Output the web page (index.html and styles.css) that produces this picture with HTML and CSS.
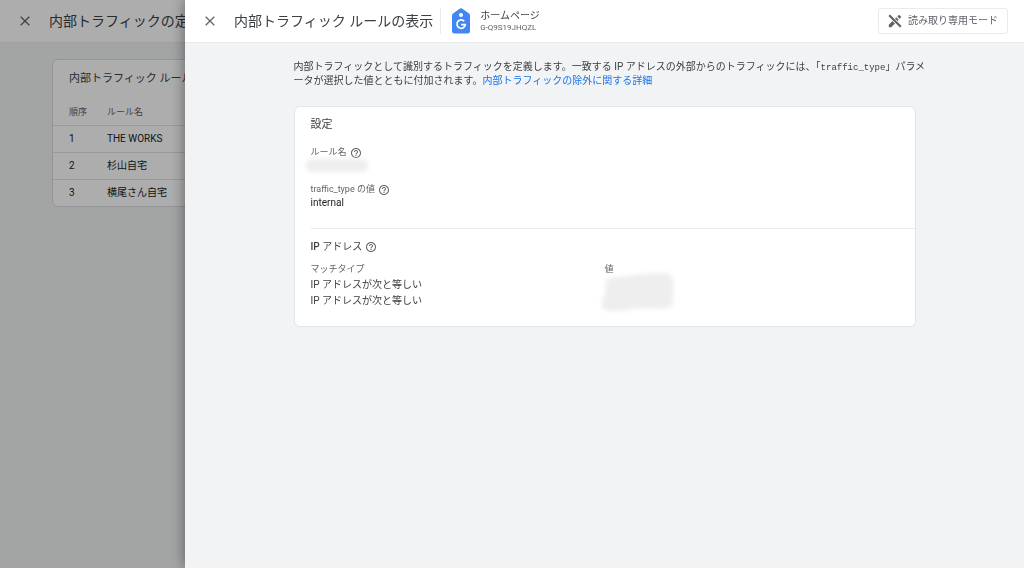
FILE: index.html
```html
<!DOCTYPE html>
<html lang="ja">
<head>
<meta charset="utf-8">
<meta name="viewport" content="width=device-width, initial-scale=1">
<title>内部トラフィック ルールの表示</title>
<link rel="stylesheet" href="styles.css">
</head>
<body>
<svg class="sprite" aria-hidden="true">
  <symbol id="close" viewBox="0 0 10 10"><path d="M.7.7l8.6 8.6M9.3.7L.7 9.3" fill="none" stroke="currentColor" stroke-width="1.3"/></symbol>
  <symbol id="help" viewBox="2 2 20 20"><path fill="currentColor" d="M11 18h2v-2h-2v2zm1-16C6.48 2 2 6.48 2 12s4.480 10 10 10 10-4.480 10-10S17.520 2 12 2zm0 18c-4.410 0-8-3.590-8-8s3.590-8 8-8 8 3.590 8 8-3.590 8-8 8zm0-14c-2.210 0-4 1.790-4 4h2c0-1.100.9-2 2-2s2 .9 2 2c0 2-3 1.750-3 5h2c0-2.250 3-2.500 3-5 0-2.210-1.790-4-4-4z"/></symbol>
</svg>
<div class="page" inert>
  <header class="bar">
    <button class="icon-button" type="button" aria-label="閉じる"><svg class="close"><use href="#close"/></svg></button>
    <h1 class="title">内部トラフィックの定義</h1>
  </header>
  <main class="rules">
    <h2 class="rules-title">内部トラフィック ルール</h2>
    <table class="rules-table">
      <thead><tr><th class="order">順序</th><th>ルール名</th></tr></thead>
      <tbody>
        <tr><td>1</td><td>THE WORKS</td></tr>
        <tr><td>2</td><td>杉山自宅</td></tr>
        <tr><td>3</td><td>横尾さん自宅</td></tr>
      </tbody>
    </table>
  </main>
</div>
<div class="scrim"></div>
<section class="drawer" role="dialog" aria-labelledby="drawer-title">
  <header class="bar">
    <button class="icon-button" type="button" aria-label="閉じる"><svg class="close"><use href="#close"/></svg></button>
    <h1 class="title" id="drawer-title">内部トラフィック ルールの表示</h1>
    <div class="property">
      <svg class="tag" viewBox="0 0 18 26" aria-hidden="true">
        <path fill="#4285f4" d="M8 .5Q9-.2 10 .5L17 5.500Q18 6.300 18 7.500V23Q18 25.500 15.500 25.500H2.500Q0 25.500 0 23V7.500Q0 6.300 1 5.500Z"/>
        <circle cx="9" cy="7" r="2" fill="#fff"/>
        <path fill="none" stroke="#fff" stroke-width="1.700" d="M12.200 13.200A4.200 4.200 0 1 0 13.300 16.700H9.200"/>
      </svg>
      <div class="property-text">
        <span class="property-name">ホームページ</span>
        <span class="property-id">G-Q9S19JHQZL</span>
      </div>
    </div>
    <button class="mode" type="button">
      <svg class="mode-icon" viewBox="0 0 14 14" aria-hidden="true">
        <path fill="#5f6368" d="M.8 10.800L8.300 3.300l2.400 2.400L3.200 13.200H.8zM9.300 2.500l1.300-1.300q.5-.5 1 0l1.300 1.300q.5.500 0 1L11.600 4.800z"/>
        <path stroke="#fff" stroke-width="3.800" d="M2.500 2.500l9 9"/>
        <path stroke="#5f6368" stroke-width="2.200" d="M1.200 1.200l11.600 11.600"/>
      </svg>
      読み取り専用モード
    </button>
  </header>
  <div class="content">
    <p class="intro">内部トラフィックとして識別するトラフィックを定義します。一致する IP アドレスの外部からのトラフィックには、「<code>traffic_type</code>」パラメ<br>ータが選択した値とともに付加されます。<a href="#">内部トラフィックの除外に関する詳細</a></p>
    <div class="card">
      <section class="settings">
        <h2 class="card-title">設定</h2>
        <dl class="fields">
          <div class="field">
            <dt>ルール名 <button class="help-button" type="button" aria-label="ルール名のヘルプ"><svg class="help"><use href="#help"/></svg></button></dt>
            <dd><span class="smudge"></span></dd>
          </div>
          <div class="field">
            <dt>traffic_type の値 <button class="help-button" type="button" aria-label="traffic_type のヘルプ"><svg class="help"><use href="#help"/></svg></button></dt>
            <dd>internal</dd>
          </div>
        </dl>
      </section>
      <section class="addresses">
        <h2 class="addresses-title"><span><b>IP</b> アドレス</span> <button class="help-button" type="button" aria-label="IP アドレスのヘルプ"><svg class="help"><use href="#help"/></svg></button></h2>
        <table class="match">
          <thead><tr><th>マッチタイプ</th><th>値</th></tr></thead>
          <tbody>
            <tr><td>IP アドレスが次と等しい</td><td rowspan="2"><svg class="smudge-large" viewBox="0 0 76 42" aria-hidden="true"><path fill="#eeeeee" d="M7 6Q24 5 34 3T66 1Q73 2 73 10V30Q72 37 60 37Q40 35 26 38Q4 42 2 34Q1 28 5 22Z"/></svg></td></tr>
            <tr><td>IP アドレスが次と等しい</td></tr>
          </tbody>
        </table>
      </section>
    </div>
  </div>
</section>
</body>
</html>
```

FILE: styles.css
```css
* { box-sizing: border-box; }
body {
  margin: 0;
  overflow: hidden;
  background: #f1f3f4;
  color: #3c4043;
  font: 10px/14px Roboto, "Noto Sans CJK JP", sans-serif;
}
h1, h2, p, dl, dd { margin: 0; font-weight: 400; }
button { font: inherit; color: inherit; cursor: pointer; }
table { width: 100%; border-collapse: collapse; }
th, td { padding: 0; text-align: left; font-weight: 400; }
.sprite { display: none; }

.bar {
  display: flex;
  align-items: center;
  height: 43px;
  padding: 0 16px;
  background: #fff;
  border-bottom: 1px solid #e8eaed;
}
.icon-button, .help-button {
  display: flex;
  padding: 0;
  border: 0;
  background: none;
  color: #5f6368;
}
.icon-button { padding: 4px; }
.close { width: 10px; height: 10px; }
.title {
  margin-left: 15px;
  font-size: 14px;
  line-height: 20px;
  color: #3c4043;
  white-space: nowrap;
}

.page { min-height: 100vh; }
.rules {
  margin: 16px 52px;
  padding-top: 9px;
  background: #fff;
  border: 1px solid #dadce0;
  border-radius: 6px;
}
.rules-title { padding: 0 16px; font-size: 11px; line-height: 20px; }
.rules-table { margin-top: 10px; }
.rules-table th { height: 26px; font-size: 9px; color: #5f6368; }
.rules-table td { height: 27px; border-top: 1px solid #e0e2e5; color: #202124; }
.rules-table .order { width: 54px; }
.rules-table tr > :first-child { padding-left: 16px; }

.scrim { position: fixed; inset: 0; background: rgba(0, 0, 0, .32); }
.drawer {
  position: fixed;
  inset: 0 0 0 185px;
  overflow: auto;
  background: #f1f3f4;
  box-shadow: 0 0 14px rgba(0, 0, 0, .45);
}

.property {
  display: flex;
  align-items: center;
  gap: 10px;
  margin-left: 7px;
  padding-left: 11px;
  border-left: 1px solid #e8eaed;
}
.tag { width: 18px; height: 26px; }
.property-text { display: flex; flex-direction: column; }
.property-name { line-height: 12px; }
.property-id { font-size: 8px; line-height: 11px; color: #5f6368; }
.mode {
  display: flex;
  align-items: center;
  gap: 6px;
  height: 26px;
  margin-left: auto;
  padding: 0 9px;
  background: #fff;
  border: 1px solid #e8eaed;
  border-radius: 3px;
  color: #5f6368;
}
.mode-icon { width: 14px; height: 14px; }

.content { max-width: 622px; margin: 0 auto; padding-top: 17px; }
.intro { margin-right: -32px; }
.intro code { font-family: "Liberation Mono", monospace; font-size: 9px; line-height: 1; }
.intro a { color: #1a73e8; text-decoration: none; }
.card {
  margin-top: 18px;
  padding-left: 16px;
  background: #fff;
  border: 1px solid #e2e5e8;
  border-radius: 6px;
}
.settings { height: 122px; padding-top: 10px; border-bottom: 1px solid #e8eaed; }
.card-title { font-size: 11px; line-height: 16px; }
.fields { display: grid; gap: 11px; padding-top: 13px; }
.field dt, .addresses-title { display: flex; align-items: center; gap: 4px; }
.field dt { font-size: 9px; line-height: 13px; color: #5f6368; }
.field dd { height: 13px; line-height: 13px; color: #202124; }
.help { width: 10px; height: 10px; }
.smudge {
  display: block;
  width: 62px;
  height: 13px;
  margin-left: -5px;
  border-radius: 6px;
  background: #eeeeee;
  filter: blur(2px);
}
.addresses { padding: 10px 16px 17px 0; }
.addresses-title { font-size: 10px; line-height: 16px; }
.addresses-title b { font-weight: 500; }
.match { margin-top: 6px; table-layout: fixed; }
.match th { height: 16px; font-size: 9px; color: #5f6368; }
.match td { height: 16px; color: #3c4043; }
.smudge-large { display: block; width: 76px; height: 42px; margin: -5px; filter: blur(2px); }
```
